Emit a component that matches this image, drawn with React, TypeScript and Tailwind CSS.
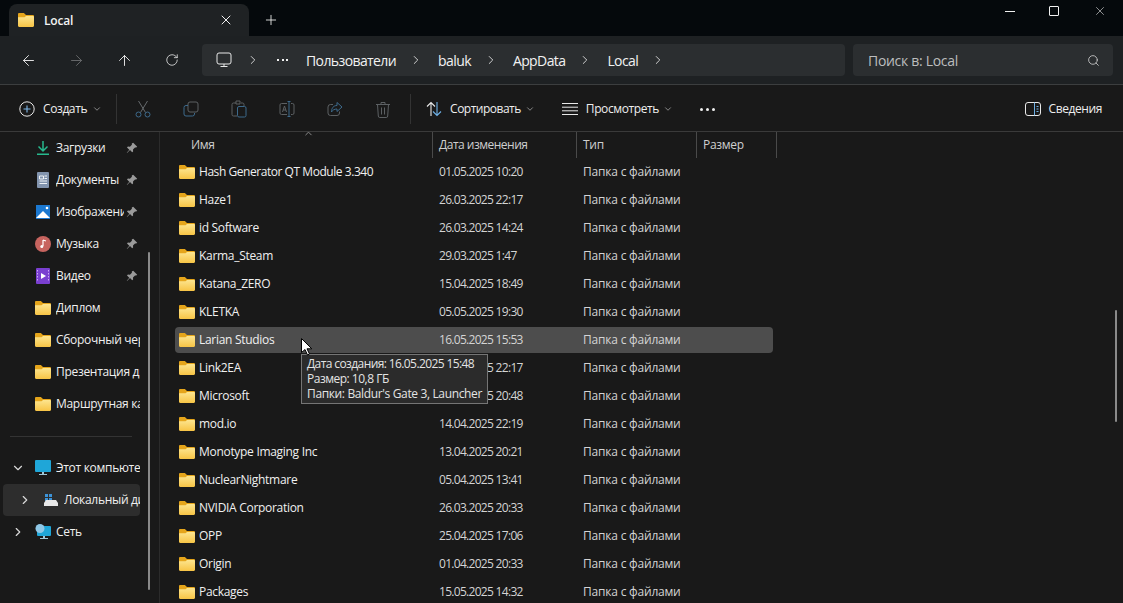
import { ReactNode } from "react";
import {
  ArrowLeft,
  ArrowRight,
  ArrowUp,
  ChevronDown,
  ChevronRight,
  ChevronUp,
  Plus,
  RotateCw,
  Search,
  X,
} from "lucide-react";

const rows = [
  ["Hash Generator QT Module 3.340", "01.05.2025 10:20"],
  ["Haze1", "26.03.2025 22:17"],
  ["id Software", "26.03.2025 14:24"],
  ["Karma_Steam", "29.03.2025 1:47"],
  ["Katana_ZERO", "15.04.2025 18:49"],
  ["KLETKA", "05.05.2025 19:30"],
  ["Larian Studios", "16.05.2025 15:53"],
  ["Link2EA", "26.03.2025 22:17"],
  ["Microsoft", "13.05.2025 20:48"],
  ["mod.io", "14.04.2025 22:19"],
  ["Monotype Imaging Inc", "13.04.2025 20:21"],
  ["NuclearNightmare", "05.04.2025 13:41"],
  ["NVIDIA Corporation", "26.03.2025 20:33"],
  ["OPP", "25.04.2025 17:06"],
  ["Origin", "01.04.2025 20:33"],
  ["Packages", "15.05.2025 14:32"],
];

function Folder({ className = "" }: { className?: string }) {
  return (
    <svg viewBox="0 0 16 14" className={`w-4 h-[14px] shrink-0 ${className}`}>
      <defs>
        <linearGradient id="folderBody" x1="0" y1="0" x2="0" y2="1">
          <stop offset="0" stopColor="#fde58f" />
          <stop offset="1" stopColor="#f7c445" />
        </linearGradient>
      </defs>
      <path d="M0 1.200C0 .5.5 0 1.200 0h4.200c.4 0 .7.1 1 .4L8 2h6.800c.7 0 1.200.5 1.200 1.200V6H0z" fill="#e5a51b" />
      <path d="M0 4.300h6.600L8 3.100h6.800c.7 0 1.200.5 1.200 1.200v8.500c0 .7-.5 1.200-1.200 1.200H1.200C.5 14 0 13.500 0 12.800z" fill="url(#folderBody)" />
    </svg>
  );
}

function Tool({ children }: { children: ReactNode }) {
  return <div className="w-12 h-8 flex items-center justify-center shrink-0">{children}</div>;
}

function Crumb({ children }: { children: ReactNode }) {
  return (
    <>
      <span className="text-[14px] tracking-[-0.6px] text-[#f2f2f2] whitespace-nowrap">{children}</span>
      <ChevronRight size={14} strokeWidth={1.5} className="ml-[13px] mr-[15px] text-[#e4e4e4] shrink-0" />
    </>
  );
}

function SideRow({ icon, label, pin, selected, arrow, indent }: { icon: ReactNode; label: string; pin?: boolean; selected?: boolean; arrow?: "down" | "right"; indent?: boolean }) {
  return (
    <div className={`w-[137px] ml-[3px] h-8 flex items-center relative rounded-sm overflow-visible ${selected ? "bg-[#2d2d2d]" : ""} ${indent ? "pl-[20px]" : "pl-[30px]"}`}>
      {arrow === "down" && <ChevronDown size={14} strokeWidth={2} className="absolute left-[8px] text-[#d8d8d8]" />}
      {arrow === "right" && <ChevronRight size={14} strokeWidth={2} className={`absolute text-[#d8d8d8] ${indent ? "left-[15px]" : "left-[8px]"}`} />}
      <div className={`w-4 h-4 flex items-center justify-center shrink-0 ${indent ? "ml-[20px]" : "ml-[2px]"}`}>{icon}</div>
      <span className={`ml-[5px] text-[12px] tracking-[-0.3px] text-[#f0f0f0] whitespace-nowrap overflow-hidden ${pin ? "w-[68px]" : indent ? "w-[76px]" : "w-[84px]"}`}>{label}</span>
      {pin && (
        <svg viewBox="0 0 12 12" className="absolute left-[123px] top-[10px] w-3 h-3">
          <path d="M7.200 .8l4 4-1 .7-1.200-.1-2 2 .1 2-.9.9-2.200-2.300L1 11l-.2-.2 2.500-3.100L1 5.500l.9-.9 2 .1 2-2-.1-1.200z" fill="#9a9a9a" />
        </svg>
      )}
    </div>
  );
}

export default function App() {
  return (
    <div className="relative w-[1123px] h-[603px] overflow-hidden bg-[#191919] text-white font-['Open_Sans','Noto_Sans',sans-serif] tracking-[-0.2px]">
      {/* Title bar */}
      <div className="h-9 bg-[#05090c] flex items-end pl-[9px]">
        <div className="w-[240px] h-8 bg-[#1f2224] rounded-t-lg flex items-center pl-[9px] pr-[15px]">
          <Folder />
          <span className="ml-[10px] mt-px text-[12px] font-semibold text-[#f2f2f2]">Local</span>
          <X size={16} strokeWidth={1.5} className="ml-auto text-[#f0f0f0]" />
        </div>
        <Plus size={16} strokeWidth={1.3} className="ml-[14px] mb-[8px] text-[#f0f0f0]" />
        <div className="ml-auto self-start flex items-center h-[22px] text-[#f0f0f0]">
          <div className="w-[10px] h-px bg-[#f0f0f0]" />
          <div className="w-[10px] h-[10px] ml-[34px] border border-[#f0f0f0] rounded-[1px]" />
          <X size={14} strokeWidth={1} className="ml-[34px] mr-[16px]" />
        </div>
      </div>

      {/* Address row */}
      <div className="h-12 bg-[#1e2123] border-b border-[#3c3e3f] flex items-center pl-1 box-content">
        <Tool><ArrowLeft size={17} strokeWidth={1.3} className="text-[#f0f0f0]" /></Tool>
        <Tool><ArrowRight size={17} strokeWidth={1.3} className="text-[#6b6d6e]" /></Tool>
        <Tool><ArrowUp size={17} strokeWidth={1.3} className="text-[#f0f0f0]" /></Tool>
        <Tool><RotateCw size={14} strokeWidth={1.3} className="text-[#f0f0f0]" /></Tool>
        <div className="ml-[6px] w-[643px] h-8 bg-[#2b2e30] rounded flex items-center pl-[14px]">
          <svg viewBox="0 0 16 16" className="w-4 h-4 text-[#e8e8e8] shrink-0" fill="none" stroke="currentColor">
            <rect x="1" y="1" width="14" height="11" rx="2" />
            <path d="M8 12v2.500M4.500 14.500h7" />
          </svg>
          <ChevronRight size={14} strokeWidth={1.5} className="ml-[14px] text-[#e4e4e4] shrink-0" />
          <span className="ml-[17px] mr-[18px] w-[11px] flex justify-between shrink-0">
            <i className="w-[2px] h-[2px] bg-[#f0f0f0]" />
            <i className="w-[2px] h-[2px] bg-[#f0f0f0]" />
            <i className="w-[2px] h-[2px] bg-[#f0f0f0]" />
          </span>
          <Crumb>Пользователи</Crumb>
          <Crumb>baluk</Crumb>
          <Crumb>AppData</Crumb>
          <Crumb>Local</Crumb>
        </div>
        <div className="ml-2 w-[260px] h-8 bg-[#2b2e30] rounded flex items-center pl-[15px] pr-[13px]">
          <span className="text-[14px] tracking-[-0.3px] text-[#bcbdbe]">Поиск в: Local</span>
          <Search size={13} strokeWidth={1.5} className="ml-auto text-[#d0d0d0]" />
        </div>
      </div>

      {/* Command bar */}
      <div className="h-[44px] pt-[2px] bg-[#191919] border-b border-[#3a3a3a] flex items-center box-content text-[12px] tracking-[-0.4px] text-[#eeeeee]">
        <svg viewBox="0 0 16 16" className="w-4 h-4 ml-[19px] shrink-0" fill="none">
          <circle cx="8" cy="8" r="7.200" stroke="#e8e8e8" />
          <path d="M8 4.500v7M4.500 8h7" stroke="#7fb7e8" strokeWidth="1.100" />
        </svg>
        <span className="ml-2">Создать</span>
        <ChevronDown size={10} strokeWidth={1.5} className="ml-[5px] text-[#c8c8c8]" />
        <div className="ml-[14px] w-px h-[30px] bg-[#333333]" />
        <div className="ml-[2px] flex items-center">
          <Tool>
            <svg viewBox="0 0 16 18" className="w-4 h-[18px]" fill="none" strokeWidth="1">
              <path d="M3.500 1l7 11.500M12.500 1l-7 11.500" stroke="#666a6d" />
              <circle cx="3.500" cy="14.500" r="2.500" stroke="#3d6a8c" />
              <circle cx="12.500" cy="14.500" r="2.500" stroke="#3d6a8c" />
            </svg>
          </Tool>
          <Tool>
            <svg viewBox="0 0 16 16" className="w-4 h-4" fill="none" strokeWidth="1">
              <rect x="5" y="1" width="10" height="10" rx="2" stroke="#5c6063" />
              <path d="M5 4.500H3a2 2 0 0 0-2 2V13a2 2 0 0 0 2 2h6.500a2 2 0 0 0 2-2v-1" stroke="#3d6a8c" />
            </svg>
          </Tool>
          <Tool>
            <svg viewBox="0 0 16 18" className="w-4 h-[18px]" fill="none" strokeWidth="1">
              <path d="M5 3H2.500A1.500 1.500 0 0 0 1 4.500v10A1.500 1.500 0 0 0 2.500 16H6M10 3h1.500A1.500 1.500 0 0 1 13 4.500V6M5 1h4v3H5z" stroke="#5c6063" />
              <rect x="6.500" y="6.500" width="8.500" height="10.500" rx="1.500" stroke="#3d6a8c" />
            </svg>
          </Tool>
          <Tool>
            <svg viewBox="0 0 16 16" className="w-4 h-4" fill="none" strokeWidth="1">
              <path d="M8 2.500H2.500A1.500 1.500 0 0 0 1 4v8a1.500 1.500 0 0 0 1.500 1.500H8M12 2.500h1.500A1.500 1.500 0 0 1 15 4v8a1.500 1.500 0 0 1-1.500 1.500H12" stroke="#5c6063" />
              <path d="M10 .5v15M8.500.5h3M8.500 15.500h3" stroke="#3d6a8c" />
              <path d="M3.500 11l2-6 2 6M4.200 9h2.600" stroke="#5c6063" />
            </svg>
          </Tool>
          <Tool>
            <svg viewBox="0 0 16 16" className="w-4 h-4" fill="none" strokeWidth="1">
              <path d="M12.500 10.500V12a2.500 2.500 0 0 1-2.500 2.500H3.500A2.500 2.500 0 0 1 1 12V6a2.500 2.500 0 0 1 2.500-2.500H6" stroke="#5c6063" />
              <path d="M10 1.500L15 6l-5 4.500V8C7.500 8 5.500 9 4.500 11c0-4 2-6.500 5.500-6.500z" stroke="#3d6a8c" />
            </svg>
          </Tool>
          <Tool>
            <svg viewBox="0 0 16 17" className="w-4 h-[17px]" fill="none" strokeWidth="1" stroke="#5c6063">
              <path d="M1 3.500h14M6 3.500V1.500h4v2M2.500 3.500l.8 11.500a1.500 1.500 0 0 0 1.500 1.500h6.400a1.500 1.500 0 0 0 1.500-1.500l.8-11.500M6.500 6.500v7M9.500 6.500v7" />
            </svg>
          </Tool>
        </div>
        <div className="ml-[3px] w-px h-[30px] bg-[#333333]" />
        <svg viewBox="0 0 16 16" className="w-4 h-4 ml-[15px] shrink-0" fill="none" strokeWidth="1.100">
          <path d="M5 15V1.500M1 5.500l4-4 4 4" stroke="#e8e8e8" />
          <path d="M11 1v13.500M7 10.500l4 4 4-4" stroke="#6fb1e6" />
        </svg>
        <span className="ml-2 tracking-[-0.5px]">Сортировать</span>
        <ChevronDown size={10} strokeWidth={1.5} className="ml-[4px] text-[#c8c8c8]" />
        <svg viewBox="0 0 16 12" className="w-4 h-3 ml-[27px] shrink-0" fill="none" stroke="#e8e8e8">
          <path d="M0 .5h16M0 4.200h16M0 7.800h16M0 11.500h16" />
        </svg>
        <span className="ml-2">Просмотреть</span>
        <ChevronDown size={10} strokeWidth={1.5} className="ml-[4px] text-[#c8c8c8]" />
        <span className="ml-[27px] flex gap-[3px]">
          <i className="w-[3px] h-[3px] rounded-full bg-[#f0f0f0]" />
          <i className="w-[3px] h-[3px] rounded-full bg-[#f0f0f0]" />
          <i className="w-[3px] h-[3px] rounded-full bg-[#f0f0f0]" />
        </span>
        <svg viewBox="0 0 16 14" className="w-4 h-[14px] ml-auto shrink-0" fill="none">
          <rect x=".5" y=".5" width="15" height="13" rx="2.500" stroke="#e8e8e8" />
          <path d="M9.500.5v13" stroke="#6fb1e6" />
          <path d="M11.500 4.500h2M11.500 7h2M11.500 9.500h2" stroke="#6fb1e6" />
        </svg>
        <span className="ml-2 mr-[21px]">Сведения</span>
      </div>

      {/* Body */}
      <div className="flex h-[471px] overflow-hidden">
        <aside className="w-[160px] shrink-0 border-r border-[#2b2b2b] relative">
          <SideRow label="Загрузки" pin icon={
            <svg viewBox="0 0 14 14" className="w-[14px] h-[14px]" fill="none" stroke="#27b98e" strokeWidth="1.500"><path d="M7 0v9.500M2.500 5.500L7 10l4.500-4.500M1 13.200h12" /></svg>
          } />
          <SideRow label="Документы" pin icon={
            <svg viewBox="0 0 13 16" className="w-[13px] h-4"><rect width="12" height="16" rx="1" fill="#8294ae" /><path d="M2.500 4h4v3h-4zM7.500 4h2.500M7.500 6.500h2.500M2.500 9h7.500M2.500 11.500h7.500" stroke="#eef2f6" fill="none" /></svg>
          } />
          <SideRow label="Изображения" pin icon={
            <svg viewBox="0 0 14 14" className="w-[14px] h-[14px]"><rect width="14" height="14" fill="#1b78d0" /><path d="M0 13l7-7 7 7z" fill="#fff" /><circle cx="11" cy="3" r="1.300" fill="#fff" /></svg>
          } />
          <SideRow label="Музыка" pin icon={
            <svg viewBox="0 0 16 16" className="w-4 h-4"><circle cx="8" cy="8" r="8" fill="#c7645f" /><path d="M8 4v6M8 4l3 1" stroke="#fff" strokeWidth="1.200" fill="none" /><circle cx="6.800" cy="10.500" r="1.500" fill="#fff" /></svg>
          } />
          <SideRow label="Видео" pin icon={
            <svg viewBox="0 0 14 16" className="w-[14px] h-4"><rect width="14" height="16" rx="1" fill="#7a3fd0" /><path d="M5 5l5 3-5 3z" fill="#fff" /><path d="M1.500 2v12M12.500 2v12" stroke="#c9a8f2" strokeDasharray="1.500 1.500" /></svg>
          } />
          <SideRow label="Диплом" icon={<Folder />} />
          <SideRow label="Сборочный чертёж" icon={<Folder />} />
          <SideRow label="Презентация диплома" icon={<Folder />} />
          <SideRow label="Маршрутная карта" icon={<Folder />} />
          <div className="ml-[10px] mt-[16px] mb-[15px] w-[122px] h-px bg-[#333333]" />
          <SideRow label="Этот компьютер" arrow="down" icon={
            <svg viewBox="0 0 16 16" className="w-4 h-4"><rect width="16" height="12" rx="1" fill="#1fa6d8" /><path d="M7 12h2v2H7zM4 14h8v1H4z" fill="#9fc6d8" /></svg>
          } />
          <SideRow label="Локальный диск (C:)" selected arrow="right" indent icon={
            <svg viewBox="0 0 16 14" className="w-4 h-[14px]"><path d="M2 1h3v3H2zM6 1h3v3H6zM2 5h3v3H2zM6 5h3v3H6z" fill="#3c93d8" /><path d="M1 10l2-3h10l2 3v3H1z" fill="#e8e8e8" /></svg>
          } />
          <SideRow label="Сеть" arrow="right" icon={
            <svg viewBox="0 0 16 16" className="w-4 h-4"><rect x="2" y="2" width="14" height="10" rx="1" fill="#1fa6d8" /><circle cx="5" cy="4.500" r="4.500" fill="#8fc7e6" /><path d="M8 12h2v2H8zM5 14h8v1H5z" fill="#9fc6d8" /></svg>
          } />
          <div className="absolute left-[148px] top-[120px] w-[2px] h-[338px] bg-[#8a8a8a] rounded-full" />
        </aside>

        <main className="flex-1 min-w-0 relative">
          {/* Column headers */}
          <div className="h-[26px] flex text-[12px] tracking-[-0.3px] text-[#cfcfcf] relative">
            <ChevronUp size={11} strokeWidth={1.5} className="absolute left-[143px] -top-[4px] text-[#bdbdbd]" />
            <div className="w-[273px] pl-[31px] flex items-center border-r border-[#4a4a4a]">Имя</div>
            <div className="w-[144px] pl-[6px] flex items-center border-r border-[#4a4a4a] tracking-[-0.5px]">Дата изменения</div>
            <div className="w-[120px] pl-[6px] flex items-center border-r border-[#4a4a4a]">Тип</div>
            <div className="w-[80px] pl-[6px] flex items-center border-r border-[#4a4a4a]">Размер</div>
          </div>
          {rows.map(([name, date]) => {
            const active = name === "Larian Studios";
            return (
              <div key={name} className="h-7 py-px pl-[15px]">
                <div className={`w-[598px] h-[26px] flex items-center text-[12px] rounded-sm ${active ? "bg-[#4d4d4d]" : ""}`}>
                  <div className="w-[264px] flex items-center pl-1">
                    <Folder />
                    <span className={`ml-1 text-[#f0f0f0] whitespace-nowrap ${name.startsWith("Hash") ? "tracking-[-0.45px]" : "tracking-[-0.3px]"}`}>{name}</span>
                  </div>
                  <span className="w-[144px] text-[#d4d4d4] tracking-[-0.7px]">{date}</span>
                  <span className="text-[#d4d4d4]">Папка с файлами</span>
                </div>
              </div>
            );
          })}
          <div className="absolute left-[955px] top-[178px] w-[2px] h-[112px] bg-[#8a8a8a] rounded-full" />

          {/* Tooltip */}
          <div className="absolute left-[141px] top-[222px] w-[187px] h-[50px] bg-[#2b2b2b] border border-[#757575] pl-[5px] pt-px text-[12px] leading-[15px] text-[#e4e4e4] whitespace-nowrap">
            <div className="tracking-[-0.6px]">Дата создания: 16.05.2025 15:48</div>
            <div className="tracking-[-0.5px]">Размер: 10,8 ГБ</div>
            <div className="tracking-[-0.36px]">Папки: Baldur's Gate 3, Launcher</div>
          </div>
        </main>
      </div>

      {/* Mouse pointer */}
      <svg viewBox="0 0 12 18" className="absolute left-[301px] top-[338px] w-3 h-[18px]">
        <path d="M.5.500v14l3.500-3 2.500 5.500 2-1-2.500-5.200h4.800z" fill="#fff" stroke="#000" strokeWidth="1" />
      </svg>
    </div>
  );
}
